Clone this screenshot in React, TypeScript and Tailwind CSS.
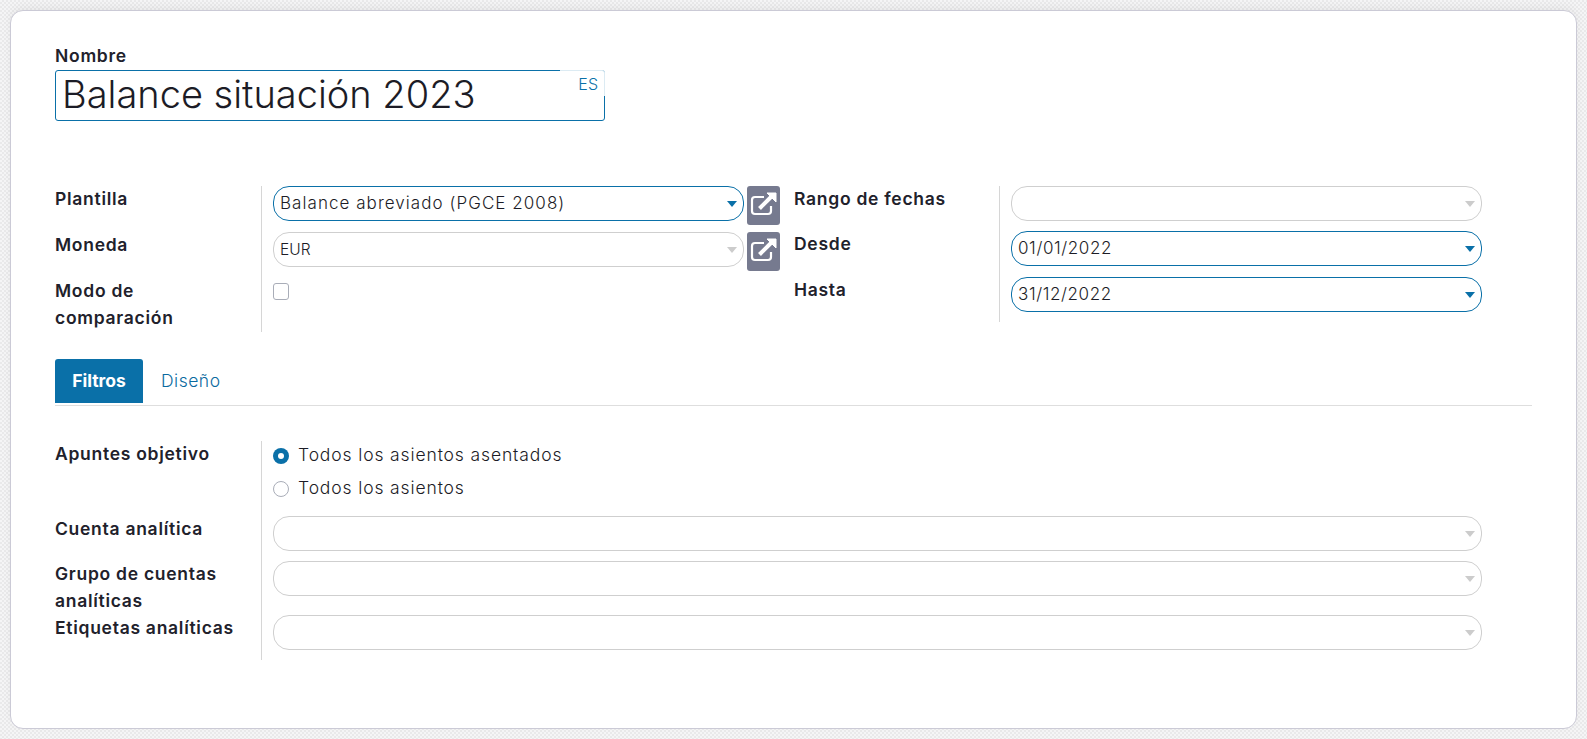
import React from 'react';

const font = { fontFamily: '"Inter", "Liberation Sans", sans-serif' };

function Arrow({ active }: { active?: boolean }) {
  return (
    <svg width="10" height="6" viewBox="0 0 10 6" className="absolute right-[6px] top-[14px]">
      <path d="M0 0H10L5 6Z" fill={active ? '#0a70a8' : '#cccccc'} />
    </svg>
  );
}

function Select({
  value,
  active,
  className,
  textClassName,
}: {
  value?: string;
  active?: boolean;
  className?: string;
  textClassName?: string;
}) {
  return (
    <div
      className={`relative h-[35px] rounded-[16px] border px-[6px] flex items-center font-light text-[#1c1c26] ${
        active ? 'border-[#0a70a8]' : 'border-[#cfcfcf]'
      } ${className ?? ''}`}
    >
      <span className={textClassName}>{value}</span>
      <Arrow active={active} />
    </div>
  );
}

function OpenButton() {
  return (
    <div className="w-[33px] h-[39px] shrink-0 rounded-[3px] bg-[#767a8f] flex items-center justify-center pb-[4px]">
      <svg width="27" height="24" viewBox="0 0 27 24" fill="none" stroke="#ffffff">
        <path d="M21 14v5a3 3 0 0 1-3 3H5a3 3 0 0 1-3-3V8a3 3 0 0 1 3-3h9" strokeWidth="2.2" />
        <path d="M9.5 16.5L21 5" strokeWidth="4" />
        <path d="M17 1H26V10Z" fill="#ffffff" strokeWidth="1" />
      </svg>
    </div>
  );
}

function Label({ children, className }: { children: React.ReactNode; className?: string }) {
  return (
    <div className={`-mt-px font-semibold text-[17.5px] tracking-[0.72px] leading-[27px] text-[#21212b] ${className ?? ''}`}>
      {children}
    </div>
  );
}

function Cell({ children, className }: { children?: React.ReactNode; className?: string }) {
  return <div className={`border-l border-[#d6d6d6] pl-[11px] ${className ?? ''}`}>{children}</div>;
}

function Radio({ checked, label }: { checked?: boolean; label: string }) {
  return (
    <div className="flex items-center h-[33px] gap-[9px] text-[17.5px] tracking-[0.87px] font-light text-[#1c1c26]">
      {checked ? (
        <span className="w-4 h-4 rounded-full bg-[#0a70a8] flex items-center justify-center">
          <span className="w-[6px] h-[6px] rounded-full bg-white" />
        </span>
      ) : (
        <span className="w-4 h-4 rounded-full border border-[#a9adb8] bg-white" />
      )}
      <span>{label}</span>
    </div>
  );
}

export default function App() {
  return (
    <div
      style={font}
      className="h-[739px] p-[10px] overflow-hidden bg-[repeating-conic-gradient(#e9e9ea_0_25%,#f5f5f6_0_50%)] bg-[length:4px_4px]"
    >
      <div className="h-[719px] w-[1567px] bg-white rounded-[13px] border border-[#cbcad6] pl-[44px] pr-[17px] pt-[32px] shadow-[0_-3px_8px_rgba(0,0,0,0.05)]">
        <Label className="mb-px">Nombre</Label>
        <div className="relative w-[550px] h-[51px] border border-[#0a70a8] rounded-[3px] pl-[6px] flex items-center text-[38px] font-light text-[#1c1c26]">
          <span className="-mt-[3px]">Balance situación 2023</span>
          <span className="absolute -top-px -right-px w-[45px] h-[26px] bg-white border-r border-t border-[#dcebf3] rounded-tr-[3px] flex items-center justify-end pr-[6px] text-[16px] font-light text-[#0a70a8]">
            ES
          </span>
        </div>

        <div className="mt-[65px] flex">
          <div className="w-[725px] grid grid-cols-[206px_1fr] grid-rows-[46px_46px_54px]">
            <Label>Plantilla</Label>
            <Cell className="flex items-start gap-[3px]">
              <Select
                value="Balance abreviado (PGCE 2008)"
                active
                className="w-[471px]"
                textClassName="text-[17px] tracking-[1.05px]"
              />
              <OpenButton />
            </Cell>
            <Label>Moneda</Label>
            <Cell className="flex items-start gap-[3px]">
              <Select value="EUR" className="w-[471px]" textClassName="text-[15.5px]" />
              <OpenButton />
            </Cell>
            <Label>
              Modo de
              <br />
              comparación
            </Label>
            <Cell className="pt-[5px]">
              <span className="block w-4 h-[17px] rounded-[3px] border border-[#a9adb8] bg-white" />
            </Cell>
          </div>

          <div className="ml-[14px] w-[688px] grid grid-cols-[205px_1fr] grid-rows-[45px_46px_45px]">
            <Label>Rango de fechas</Label>
            <Cell>
              <Select />
            </Cell>
            <Label>Desde</Label>
            <Cell>
              <Select value="01/01/2022" active textClassName="text-[17px] tracking-[0.6px]" />
            </Cell>
            <Label>Hasta</Label>
            <Cell>
              <Select value="31/12/2022" active textClassName="text-[17px] tracking-[0.6px]" />
            </Cell>
          </div>
        </div>

        <div className="mt-[27px] flex items-start border-b border-[#dedede] h-[47px] w-[1477px]">
          <div className="w-[88px] h-[44px] bg-[#0a70a8] rounded-t-[3px] flex items-center justify-center font-bold text-[17.5px] text-white">
            Filtros
          </div>
          <div className="pl-[18px] h-[44px] flex items-center font-light text-[17.5px] tracking-[0.5px] text-[#0a6aa0]">
            Diseño
          </div>
        </div>

        <div className="mt-[35px] w-[1427px] grid grid-cols-[206px_1fr] grid-rows-[75px_45px_54px_45px]">
          <Label>Apuntes objetivo</Label>
          <Cell>
            <div className="-mt-[2px]">
              <Radio checked label="Todos los asientos asentados" />
              <Radio label="Todos los asientos" />
            </div>
          </Cell>
          <Label>Cuenta analítica</Label>
          <Cell>
            <Select />
          </Cell>
          <Label>
            Grupo de cuentas
            <br />
            analíticas
          </Label>
          <Cell>
            <Select />
          </Cell>
          <Label>Etiquetas analíticas</Label>
          <Cell>
            <Select />
          </Cell>
        </div>
      </div>
    </div>
  );
}
